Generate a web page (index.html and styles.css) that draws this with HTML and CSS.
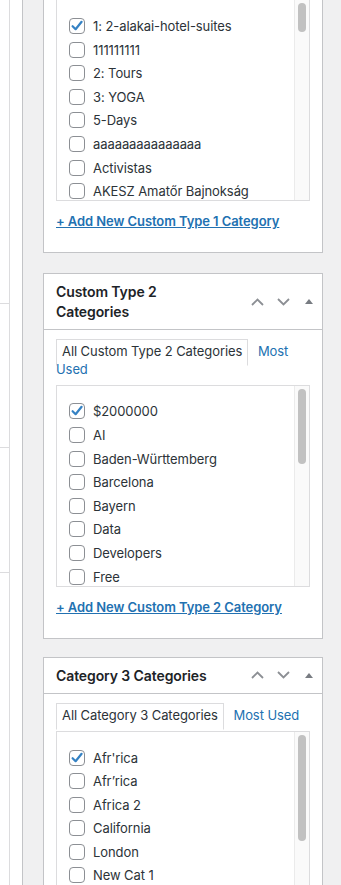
FILE: index.html
```html
<!DOCTYPE html>
<html lang="en">
<head>
<meta charset="utf-8">
<title>Categories</title>
<link rel="stylesheet" href="styles.css">
</head>
<body>
<div class="page">
  <div class="main">
    <div class="main-edge">
      <div class="edge-row a"></div>
      <div class="edge-row b"></div>
      <div class="edge-row c"></div>
    </div>
  </div>
  <div class="sidebar">

    <div class="postbox first p1">
      <div class="postbox-header">
        <h2 class="hndle">Custom Type 1 Categories</h2>
        <div class="handle-actions">
          <span class="handle-btn"><svg width="13" height="8" viewBox="0 0 13 8"><polyline points="1,7 6.5,1.5 12,7" fill="none" stroke="#8c8f94" stroke-width="1.8"/></svg></span>
          <span class="handle-btn"><svg width="13" height="8" viewBox="0 0 13 8"><polyline points="1,1 6.5,6.5 12,1" fill="none" stroke="#8c8f94" stroke-width="1.8"/></svg></span>
          <span class="handle-btn"><svg width="8" height="5" viewBox="0 0 8 5"><polygon points="0,5 4,0 8,5" fill="#787c82"/></svg></span>
        </div>
      </div>
      <div class="inside">
        <ul class="category-tabs">
          <li class="tabs">All Custom Type 1 Categories</li>
          <li class="tab-link"><a href="#">Most Used</a></li>
        </ul>
        <div class="tabs-panel">
          <ul class="checklist">
            <li><span class="cb checked"><svg width="14" height="14" viewBox="0 0 14 14"><path d="M2.6 7.2 L5.6 10.2 L11.6 2.8" fill="none" stroke="#3582c4" stroke-width="2.2" stroke-linecap="round" stroke-linejoin="round"/></svg></span><span class="lbl">1: 2-alakai-hotel-suites</span></li>
            <li><span class="cb"></span><span class="lbl">111111111</span></li>
            <li><span class="cb"></span><span class="lbl">2: Tours</span></li>
            <li><span class="cb"></span><span class="lbl">3: YOGA</span></li>
            <li><span class="cb"></span><span class="lbl">5-Days</span></li>
            <li><span class="cb"></span><span class="lbl">aaaaaaaaaaaaaaa</span></li>
            <li><span class="cb"></span><span class="lbl">Activistas</span></li>
            <li><span class="cb"></span><span class="lbl">AKESZ Amatőr Bajnokság</span></li>
            <li><span class="cb"></span><span class="lbl">Alaska</span></li>
          </ul>
          <div class="sb"><div class="sb-thumb t1"></div></div>
        </div>
        <h4 class="adder"><a href="#">+ Add New Custom Type 1 Category</a></h4>
      </div>
    </div>

    <div class="postbox p2">
      <div class="postbox-header">
        <h2 class="hndle">Custom Type 2 Categories</h2>
        <div class="handle-actions">
          <span class="handle-btn"><svg width="13" height="8" viewBox="0 0 13 8"><polyline points="1,7 6.5,1.5 12,7" fill="none" stroke="#8c8f94" stroke-width="1.8"/></svg></span>
          <span class="handle-btn"><svg width="13" height="8" viewBox="0 0 13 8"><polyline points="1,1 6.5,6.5 12,1" fill="none" stroke="#8c8f94" stroke-width="1.8"/></svg></span>
          <span class="handle-btn"><svg width="8" height="5" viewBox="0 0 8 5"><polygon points="0,5 4,0 8,5" fill="#787c82"/></svg></span>
        </div>
      </div>
      <div class="inside">
        <ul class="category-tabs">
          <li class="tabs">All Custom Type 2 Categories</li>
          <li class="tab-link"><a href="#">Most Used</a></li>
        </ul>
        <div class="tabs-panel">
          <ul class="checklist">
            <li><span class="cb checked"><svg width="14" height="14" viewBox="0 0 14 14"><path d="M2.6 7.2 L5.6 10.2 L11.6 2.8" fill="none" stroke="#3582c4" stroke-width="2.2" stroke-linecap="round" stroke-linejoin="round"/></svg></span><span class="lbl">$2000000</span></li>
            <li><span class="cb"></span><span class="lbl">AI</span></li>
            <li><span class="cb"></span><span class="lbl">Baden-Württemberg</span></li>
            <li><span class="cb"></span><span class="lbl">Barcelona</span></li>
            <li><span class="cb"></span><span class="lbl">Bayern</span></li>
            <li><span class="cb"></span><span class="lbl">Data</span></li>
            <li><span class="cb"></span><span class="lbl">Developers</span></li>
            <li><span class="cb"></span><span class="lbl">Free</span></li>
            <li><span class="cb"></span><span class="lbl">Germany</span></li>
          </ul>
          <div class="sb"><div class="sb-thumb t2"></div></div>
        </div>
        <h4 class="adder"><a href="#">+ Add New Custom Type 2 Category</a></h4>
      </div>
    </div>

    <div class="postbox p3">
      <div class="postbox-header">
        <h2 class="hndle">Category 3 Categories</h2>
        <div class="handle-actions">
          <span class="handle-btn"><svg width="13" height="8" viewBox="0 0 13 8"><polyline points="1,7 6.5,1.5 12,7" fill="none" stroke="#8c8f94" stroke-width="1.8"/></svg></span>
          <span class="handle-btn"><svg width="13" height="8" viewBox="0 0 13 8"><polyline points="1,1 6.5,6.5 12,1" fill="none" stroke="#8c8f94" stroke-width="1.8"/></svg></span>
          <span class="handle-btn"><svg width="8" height="5" viewBox="0 0 8 5"><polygon points="0,5 4,0 8,5" fill="#787c82"/></svg></span>
        </div>
      </div>
      <div class="inside">
        <ul class="category-tabs">
          <li class="tabs">All Category 3 Categories</li>
          <li class="tab-link"><a href="#">Most Used</a></li>
        </ul>
        <div class="tabs-panel">
          <ul class="checklist">
            <li><span class="cb checked"><svg width="14" height="14" viewBox="0 0 14 14"><path d="M2.6 7.2 L5.6 10.2 L11.6 2.8" fill="none" stroke="#3582c4" stroke-width="2.2" stroke-linecap="round" stroke-linejoin="round"/></svg></span><span class="lbl">Afr'rica</span></li>
            <li><span class="cb"></span><span class="lbl">Afr’rica</span></li>
            <li><span class="cb"></span><span class="lbl">Africa 2</span></li>
            <li><span class="cb"></span><span class="lbl">California</span></li>
            <li><span class="cb"></span><span class="lbl">London</span></li>
            <li><span class="cb"></span><span class="lbl">New Cat 1</span></li>
            <li><span class="cb"></span><span class="lbl">New York</span></li>
            <li><span class="cb"></span><span class="lbl">Paris</span></li>
          </ul>
          <div class="sb"><div class="sb-thumb t3"></div></div>
        </div>
        <h4 class="adder"><a href="#">+ Add New Category 3 Category</a></h4>
      </div>
    </div>

  </div>
</div>
</body>
</html>
```

FILE: styles.css
```css
* { box-sizing: border-box; }
html, body { margin: 0; height: 885px; overflow: hidden; }
body {
  font-family: Inter, "Noto Sans", sans-serif;
  font-size: 13px;
  letter-spacing: -0.08px;
  color: #2c3338;
  background: #f0f0f1;
}
.page { display: flex; height: 885px; }

.main {
  width: 23px;
  flex: none;
  background: #fff;
  border-right: 1px solid #c3c4c7;
}
.main-edge {
  width: 10px;
  height: 100%;
  border-right: 1px solid #dcdcde;
}
.edge-row { border-bottom: 1px solid #dcdcde; }
.edge-row.a { height: 304px; }
.edge-row.b { height: 144px; }
.edge-row.c { height: 125px; }

.sidebar {
  flex: 1;
  min-width: 0;
  padding: 0 18px 0 20px;
}

.postbox {
  background: #fff;
  border: 1px solid #c3c4c7;
  margin-bottom: 20px;
}
.postbox.first { margin-top: -112px; }
.postbox.p3 { margin-top: -2px; }

.postbox-header {
  display: flex;
  align-items: center;
  border-bottom: 1px solid #c3c4c7;
}
.hndle {
  flex: 1;
  min-width: 0;
  margin: 0;
  padding: 8px 20px 8px 12px;
  font-size: 14px;
  line-height: 1.4;
  font-weight: 600;
  letter-spacing: -0.1px;
  color: #1d2327;
}
.handle-actions { display: flex; flex: none; }
.handle-btn {
  width: 26px;
  height: 30px;
  display: flex;
  align-items: center;
  justify-content: center;
}

.inside { padding: 0 12px 12px; }

.category-tabs {
  margin: 13px 0 6px;
  padding: 0;
  list-style: none;
  line-height: 1.35;
}
.category-tabs li {
  display: inline;
  padding: 3px 5px 6px;
  border: 1px solid transparent;
  position: relative;
  z-index: 1;
}
.category-tabs li.tabs {
  border-color: #dcdcde;
  border-bottom-color: #fff;
  background: #fff;
}
.category-tabs a { color: #2271b1; text-decoration: none; }

.tabs-panel {
  position: relative;
  height: 202px;
  border: 1px solid #dcdcde;
  padding: 0 12px;
  overflow: hidden;
  background: #fff;
}
.checklist {
  margin: 14px 0;
  padding: 0;
  list-style: none;
}
.checklist li {
  height: 23.6px;
  display: flex;
  align-items: center;
  gap: 8px;
  white-space: nowrap;
}
.cb {
  width: 16px;
  height: 16px;
  flex: none;
  border: 1px solid #8c8f94;
  border-radius: 4px;
  background: #fff;
  display: flex;
  align-items: center;
  justify-content: center;
}

.sb {
  position: absolute;
  top: 0;
  right: 0;
  bottom: 0;
  width: 15px;
  background: #fafafa;
  border-left: 1px solid #ebebeb;
}
.sb-thumb {
  position: absolute;
  left: 3px;
  width: 8px;
  border-radius: 4px;
  background: #c1c1c1;
}
.sb-thumb.t1 { top: 3px; height: 29px; }
.sb-thumb.t2 { top: 3px; height: 75px; }
.sb-thumb.t3 { top: 3px; height: 106px; }

.adder {
  margin: 11px 0 10px;
  font-size: 13px;
  line-height: 18px;
  font-weight: 600;
}
.adder a { color: #2271b1; text-decoration: underline; }
```
